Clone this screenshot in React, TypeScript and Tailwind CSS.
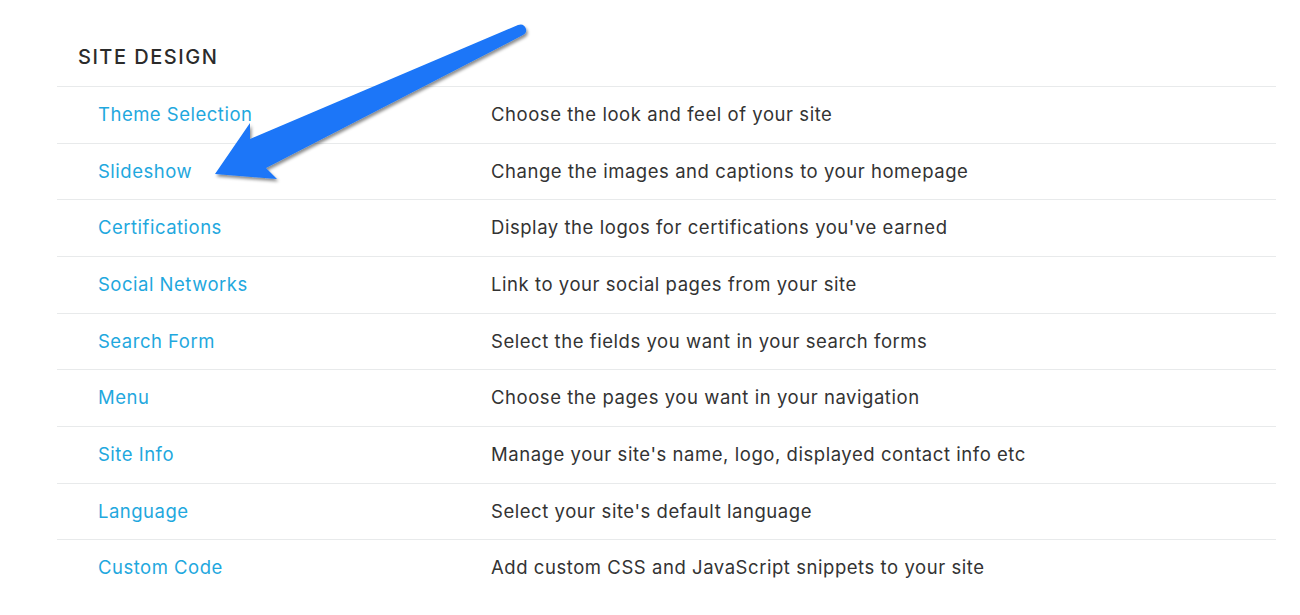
import React from 'react';

const rows = [
  { name: 'Theme Selection', desc: 'Choose the look and feel of your site' },
  { name: 'Slideshow', desc: 'Change the images and captions to your homepage' },
  { name: 'Certifications', desc: "Display the logos for certifications you've earned" },
  { name: 'Social Networks', desc: 'Link to your social pages from your site' },
  { name: 'Search Form', desc: 'Select the fields you want in your search forms' },
  { name: 'Menu', desc: 'Choose the pages you want in your navigation' },
  { name: 'Site Info', desc: "Manage your site's name, logo, displayed contact info etc" },
  { name: 'Language', desc: "Select your site's default language" },
  { name: 'Custom Code', desc: 'Add custom CSS and JavaScript snippets to your site' },
];

function Arrow() {
  return (
    <svg
      className="absolute left-0 top-0 pointer-events-none"
      width="560"
      height="220"
      viewBox="0 0 560 220"
    >
      <defs>
        <filter id="shadow" x="-10%" y="-10%" width="130%" height="140%">
          <feDropShadow dx="1.5" dy="2.5" stdDeviation="1.5" floodColor="#000" floodOpacity="0.45" />
        </filter>
      </defs>
      <path
        d="M215 174 L250 123 L250 139 L518 25 Q524 23 526 29 Q527 33 523 35 L266 168 L277 179 Z"
        fill="#1a76f8"
        filter="url(#shadow)"
      />
    </svg>
  );
}

export default function App() {
  return (
    <div className="relative w-[1300px] h-[615px] bg-white overflow-hidden font-['Inter',sans-serif]">
      <div className="ml-[57px] w-[1219px]">
        <div className="h-[86px] pl-[21px] pt-[44px]">
          <h2 className="text-[20px] leading-[26px] font-medium tracking-[1.5px] text-[#2b2b2b]">SITE DESIGN</h2>
        </div>
        {rows.map((r) => (
          <div key={r.name} className="flex items-center h-[56.67px] border-t border-[#e8eaeb]">
            <a className="w-[434px] pl-[41px] text-[18.5px] tracking-[0.5px] text-[#1fa8de] cursor-pointer">{r.name}</a>
            <span className="text-[18.5px] tracking-[0.55px] text-[#333333]">{r.desc}</span>
          </div>
        ))}
      </div>
      <Arrow />
    </div>
  );
}
